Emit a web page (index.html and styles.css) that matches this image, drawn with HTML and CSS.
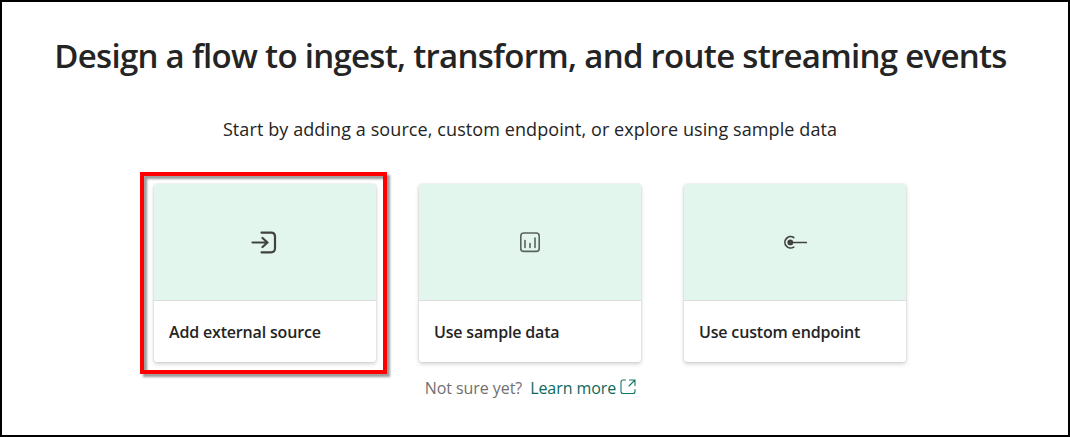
FILE: index.html
```html
<!DOCTYPE html>
<html lang="en">
<head>
<meta charset="utf-8">
<title>Design a flow</title>
<link rel="stylesheet" href="styles.css">
</head>
<body>
<main class="panel">
  <h1 class="title"><span>Design a flow to ingest, transform, and route streaming events</span></h1>
  <p class="subtitle"><span>Start by adding a source, custom endpoint, or explore using sample data</span></p>
  <div class="cards">
    <div class="card highlighted">
      <div class="art">
        <svg width="28" height="26" viewBox="0 0 28 26" fill="none" stroke="#424242" stroke-width="2.2" stroke-linecap="round" stroke-linejoin="round"><path d="M10.500 3.700H20q4 0 4 4v11.600q0 4-4 4H10.500M1.500 13.500h14.500M11.500 9l5 4.500-5 4.500"/></svg>
      </div>
      <div class="label"><span class="name-source">Add external source</span></div>
      <div class="callout"></div>
    </div>
    <div class="card">
      <div class="art">
        <svg width="28" height="26" viewBox="0 0 28 26" fill="none" stroke="#5a625f" stroke-width="1.600" stroke-linecap="round"><rect x="4.800" y="4" width="18.400" height="18.400" rx="3"/><path d="M9 11.500v7M14 14.500v4M19 9v9.500"/></svg>
      </div>
      <div class="label"><span class="name-sample">Use sample data</span></div>
    </div>
    <div class="card">
      <div class="art">
        <svg width="28" height="26" viewBox="0 0 28 26" fill="none" stroke="#424242" stroke-width="1.700" stroke-linecap="round"><path d="M12.700 8.500A5.700 5.700 0 1 0 12.700 18.100M9.500 13.500h15.800"/><circle cx="9.300" cy="13.400" r="2.900" fill="#424242" stroke="none"/></svg>
      </div>
      <div class="label"><span class="name-custom">Use custom endpoint</span></div>
    </div>
  </div>
  <div class="help">
    <span class="muted">Not sure yet?</span>
    <a class="link"><span>Learn more</span><svg width="16" height="16" viewBox="0 0 16 16" fill="none" stroke="#117865" stroke-width="1.100" stroke-linecap="round" stroke-linejoin="round"><path d="M5.500 1H3Q1 1 1 3v9.500q0 2 2 2h10q2 0 2-2V10.500M9.500 1H15v5.500M15 1L9 7"/></svg></a>
  </div>
</main>
</body>
</html>
```
FILE: styles.css
```css
* { box-sizing: border-box; }
body { margin: 0; background: #fff; font-family: "Open Sans", "Noto Sans", sans-serif; color: #242424; }
.panel { width: 1070px; height: 437px; border: 2px solid #000; padding-top: 30px; display: flex; flex-direction: column; align-items: center; overflow: hidden; }
.title { margin: 0; padding-right: 9px; height: 48px; line-height: 48px; font-size: 33px; font-weight: 600; letter-spacing: -0.71px; white-space: nowrap; }
.subtitle { margin: 37px 10px 0 0; height: 24px; line-height: 24px; font-size: 18px; letter-spacing: 0.09px; white-space: nowrap; }
.cards { display: flex; gap: 43px; margin: 43px 10px 0 0; }
.card { position: relative; width: 222px; height: 178px; border-radius: 3px; background: #fff; box-shadow: 0 0 2px rgba(0,0,0,.14), 0 2px 4px rgba(0,0,0,.18); }
.art { height: 117px; display: flex; align-items: center; justify-content: center; background: #e3f6ee; border-bottom: 1px solid #dcdcdc; border-radius: 3px 3px 0 0; }
.label { height: 61px; padding: 1px 0 0 15px; line-height: 61px; font-size: 16px; font-weight: 600; letter-spacing: -0.17px; white-space: nowrap; }
.callout { position: absolute; left: -14px; top: -12px; width: 247px; height: 202px; border: 4px solid #f00; filter: drop-shadow(3px 3px 1px rgba(0,0,0,.4)); }
.help { display: flex; align-items: center; gap: 8px; height: 24px; margin: 14px 0 0; padding-right: 9px; font-size: 16px; letter-spacing: -0.07px; white-space: nowrap; }
.muted { color: #707070; }
.link { display: flex; align-items: center; gap: 4px; color: #0c695a; }
.link svg { margin-top: -2px; }
```
